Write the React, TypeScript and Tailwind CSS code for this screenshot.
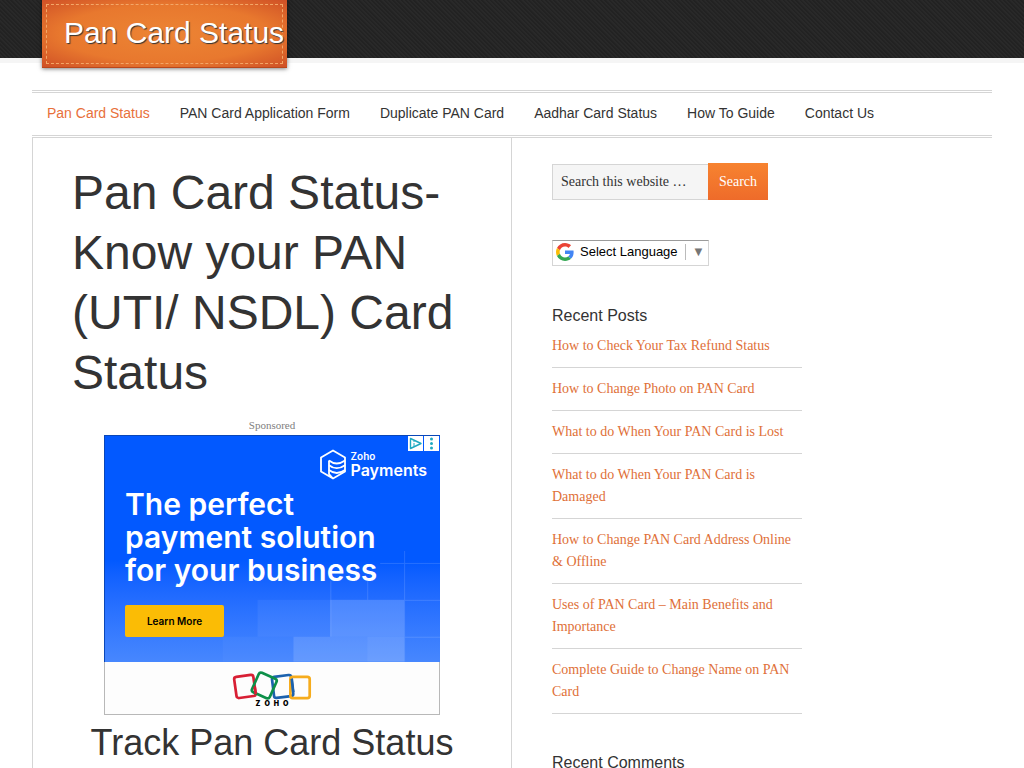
import { useState } from 'react';

const menu = [
  'Pan Card Status',
  'PAN Card Application Form',
  'Duplicate PAN Card',
  'Aadhar Card Status',
  'How To Guide',
  'Contact Us',
];

const recentPosts = [
  'How to Check Your Tax Refund Status',
  'How to Change Photo on PAN Card',
  'What to do When Your PAN Card is Lost',
  'What to do When Your PAN Card is Damaged',
  'How to Change PAN Card Address Online & Offline',
  'Uses of PAN Card – Main Benefits and Importance',
  'Complete Guide to Change Name on PAN Card',
];

function GoogleLogo() {
  return (
    <svg viewBox="0 0 48 48" className="h-[18px] w-[18px] shrink-0" aria-hidden="true">
      <path fill="#ea4335" d="M24 9.5c3.54 0 6.71 1.22 9.21 3.6l6.85-6.85C35.9 2.38 30.47 0 24 0 14.62 0 6.51 5.38 2.56 13.22l7.98 6.19C12.43 13.72 17.74 9.5 24 9.5z" />
      <path fill="#4285f4" d="M46.98 24.55c0-1.57-.15-3.09-.38-4.55H24v9.02h12.94c-.58 2.96-2.26 5.48-4.78 7.18l7.73 6c4.51-4.18 7.09-10.36 7.09-17.65z" />
      <path fill="#fbbc05" d="M10.53 28.59c-.48-1.45-.76-2.99-.76-4.59s.27-3.14.76-4.59l-7.98-6.19C.92 16.46 0 20.12 0 24c0 3.88.92 7.54 2.56 10.78l7.97-6.19z" />
      <path fill="#34a853" d="M24 48c6.48 0 11.93-2.13 15.89-5.81l-7.73-6c-2.15 1.45-4.92 2.3-8.16 2.3-6.26 0-11.57-4.22-13.47-9.91l-7.98 6.19C6.51 42.62 14.62 48 24 48z" />
    </svg>
  );
}

function PaymentsLogo() {
  return (
    <svg viewBox="0 0 28 31" className="h-[31px] w-7" fill="none" stroke="#fff" strokeWidth="1.8" strokeLinejoin="round" aria-hidden="true">
      <path d="M14 29.5 L2 22.5 V8.5 L14 1.5 L26 8.5 V22.5 L14 29.5 L10 25 V11.5" />
      <path d="M10 11.5 C15 15.5 21 15 26 11.5" />
      <path d="M10 16.2 C15 20.2 21 19.7 26 16.2" />
      <path d="M10 21 C15 25 21 24.5 26 21" />
    </svg>
  );
}

function ZohoLogo() {
  return (
    <svg viewBox="0 0 82 30" className="h-[29px] w-20" fill="none" strokeWidth="2.8" aria-hidden="true">
      <rect x="3" y="5" width="20" height="22" rx="2.5" stroke="#d81f34" transform="rotate(-8 13 16)" />
      <rect x="42" y="5" width="20" height="22" rx="2.5" stroke="#1c62ae" transform="rotate(-7 52 16)" />
      <rect x="23" y="4" width="20" height="22" rx="2.5" stroke="#0d9049" transform="rotate(24 33 15)" />
      <rect x="60" y="6" width="20" height="22" rx="2.5" stroke="#f6ac1d" />
      <path d="M23 16 L24.2 24" stroke="#d81f34" />
      <path d="M61.4 8 L63 22" stroke="#1c62ae" />
    </svg>
  );
}

function Advert() {
  return (
    <div className="relative mx-auto flex h-[280px] w-[336px] flex-col border border-[#b8b8b8] bg-[#fdfdfd] font-[Inter,sans-serif]">
      <div className="relative -mx-px -mt-px h-[227px] border-t border-l border-[#0a47b8] bg-linear-to-b from-[#0259ff] from-55% to-[#4787fe] pl-5">
        <svg viewBox="0 0 336 226" className="absolute inset-0 h-full w-full" aria-hidden="true">
          <g fill="#fff">
            <rect x="153" y="164" width="73" height="37" opacity=".06" />
            <rect x="226" y="164" width="74" height="37" opacity=".18" />
            <rect x="118" y="201" width="71" height="25" opacity=".03" />
            <rect x="189" y="201" width="74" height="25" opacity=".16" />
            <rect x="263" y="201" width="37" height="25" opacity=".2" />
          </g>
          <path
            d="M300.5 115V226M263.5 145V164M226.5 145V201M276 127.5H336M300 164.5H336M300 201.5H336"
            stroke="#fff"
            opacity=".13"
          />
        </svg>
        <div className="relative flex justify-end gap-1 pt-[13px] pr-[13px] text-white">
          <PaymentsLogo />
          <p className="flex flex-col font-semibold">
            <span className="text-[10px] leading-[14px]">Zoho</span>
            <span className="text-[16px] leading-[14px]">Payments</span>
          </p>
        </div>
        <p className="relative mt-2 text-[30px] leading-[33px] font-semibold text-white">
          The perfect
          <br />
          payment solution
          <br />
          for your business
        </p>
        <button className="relative mt-[18px] block h-8 w-[99px] rounded-xs bg-[#fbbc05] text-[10px] font-semibold text-black">
          Learn More
        </button>
      </div>
      <div className="flex flex-1 flex-col items-center pt-[9px]">
        <ZohoLogo />
        <span className="flex gap-1 text-[7px] leading-[7px] font-black text-black">
          <span>Z</span>
          <span>O</span>
          <span>H</span>
          <span>O</span>
        </span>
      </div>
      <div className="absolute top-0 right-0 flex gap-px">
        <svg viewBox="0 0 15 15" className="h-[15px] w-[15px] bg-white" fill="none" stroke="#1fa9c0" aria-hidden="true">
          <path d="M2.5 2.5 L13 7.5 L2.5 12.5 Z" strokeWidth="1.4" strokeLinejoin="round" />
          <path d="M6 7V10.5M6 5V6" />
        </svg>
        <svg viewBox="0 0 15 15" className="h-[15px] w-[15px] bg-white" fill="#1fa9c0" aria-hidden="true">
          <circle cx="7.5" cy="3" r="1.5" />
          <circle cx="7.5" cy="7.5" r="1.5" />
          <circle cx="7.5" cy="12" r="1.5" />
        </svg>
      </div>
    </div>
  );
}

function Header() {
  return (
    <header className="h-[63px] border-b-[5px] border-[#f5f5f5] bg-[#252525] bg-[repeating-linear-gradient(45deg,#222_0px,#222_1px,#292929_2px,#292929_3px)]">
      <div className="mx-auto max-w-[960px] px-2.5">
        <div className="relative h-[68px] w-[245px] border-b border-[#b9471c] bg-[radial-gradient(ellipse_at_center,#ec8434_0%,#e8782e_60%,#cf5026_100%)] p-1 shadow-[0_1px_4px_rgba(0,0,0,0.5)]">
          <div className="h-[60px] border border-dashed border-[#f3a768] pt-[7px] pl-[17px]">
            <a
              href="#"
              className="text-[30px] leading-[42px] whitespace-nowrap text-white [text-shadow:1px_1px_1px_#333]"
            >
              Pan Card Status
            </a>
          </div>
        </div>
      </div>
    </header>
  );
}

export default function App() {
  const [query, setQuery] = useState('');

  return (
    <div className="min-h-screen bg-white font-['Liberation_Sans',Arial,sans-serif] text-[#333]">
      <Header />
      <div className="mx-auto mt-[27px] max-w-[960px]">
        <nav className="border-y-3 border-double border-[#d5d5d5]">
          <ul className="flex pb-0.5 text-[14px] leading-10">
            {menu.map((item, i) => (
              <li key={item}>
                <a href="#" className={i === 0 ? 'block px-[15px] text-[#e8703a]' : 'block px-[15px] hover:text-[#e8703a]'}>
                  {item}
                </a>
              </li>
            ))}
          </ul>
        </nav>

        <div className="flex">
          <main className="w-1/2 border-x border-[#d5d5d5] px-[39px] pt-[25px] pb-2">
            <h1 className="text-[48px] leading-[60px]">Pan Card Status- Know your PAN (UTI/ NSDL) Card Status</h1>
            <p className="mt-[14px] mb-px text-center font-['Liberation_Serif',serif] text-[11px] leading-[17px] text-[#808080]">
              Sponsored
            </p>
            <Advert />
            <h2 className="mt-[5px] text-center text-[36px] leading-[45px]">Track Pan Card Status</h2>
          </main>

          <aside className="w-[290px] pt-[25px] pb-4 pl-10">
            <form className="flex items-end font-['Liberation_Serif',serif] text-[14px]" onSubmit={e => e.preventDefault()}>
              <input
                type="search"
                aria-label="Search this website"
                value={query}
                onChange={e => setQuery(e.target.value)}
                placeholder="Search this website …"
                className="h-9 w-[156px] border border-r-0 border-[#d5d5d5] bg-[#f5f5f5] px-2 placeholder:text-[#333]"
              />
              <button type="submit" className="h-[37px] w-[60px] bg-linear-to-b from-[#f78330] to-[#ee6b2a] text-white">
                Search
              </button>
            </form>

            <div className="mt-10 flex h-[26px] w-[157px] items-center border border-[#d5d5d5] border-t-[#9b9b9b] pb-0.5 pl-[3px]">
              <GoogleLogo />
              <select
                aria-label="Language"
                className="ml-1.5 w-[105px] appearance-none text-[13px] leading-4 text-black"
              >
                <option>Select Language</option>
              </select>
              <span className="h-4 border-l border-[#bbb] pl-1.5 text-[13px] leading-4 text-[#767676]" aria-hidden="true">
                ▼
              </span>
            </div>

            <section className="mt-10">
              <h4 className="text-[16px] leading-[19px]">Recent Posts</h4>
              <ul className="font-['Liberation_Serif',serif] text-[14px] leading-[22px]">
                {recentPosts.map(post => (
                  <li key={post} className="border-b border-[#d5d5d5] py-2.5">
                    <a href="#" className="text-[#e07038] hover:underline">
                      {post}
                    </a>
                  </li>
                ))}
              </ul>
            </section>

            <section className="mt-[39px]">
              <h4 className="text-[16px] leading-[19px]">Recent Comments</h4>
            </section>
          </aside>
        </div>
      </div>
    </div>
  );
}
